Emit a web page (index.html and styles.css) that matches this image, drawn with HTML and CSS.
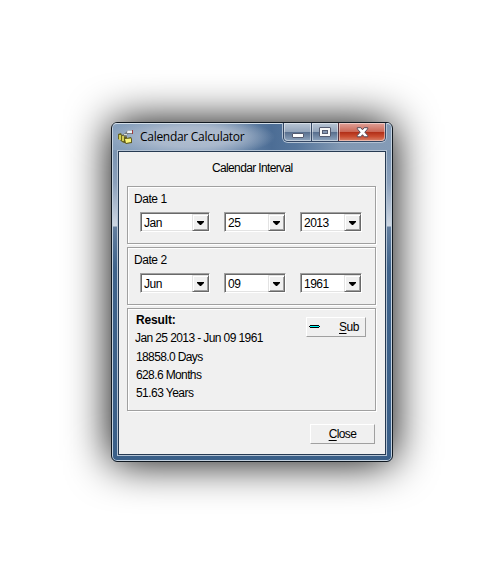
FILE: index.html
```
<!DOCTYPE html>
<html lang="en">
<head>
<meta charset="utf-8">
<title>Calendar Calculator</title>
<link rel="stylesheet" href="styles.css">
</head>
<body>
<main class="window">
  <header class="titlebar">
    <svg class="app-icon" width="16" height="16" viewBox="0 0 16 16">
      <path d="M0 5l3-1 1 2 3-1 2 3v6H6l-2-1-2-2-2-1z" fill="#6b6721"/>
      <path d="M1 6h2v5H1zM4 7h2v5H4z" fill="#d3cd55"/>
      <path d="M6 9l2-1 1 1 4-1 1 2v4l-6 1-2-2z" fill="#5f5b1c"/>
      <path d="M7 10l6-.5V13l-5 1z" fill="#fbf67a"/>
      <path d="M5 6l5-5h4v4h-4L7 8z" fill="#777d80"/>
      <path d="M9.500 1.500h4.500v2.500H9z" fill="#eef3f7"/>
      <path d="M14 1h1v4h-1z" fill="#a33b3b"/>
      <path d="M6 5h3v1H6z" fill="#d7ded9"/>
    </svg>
    <h1 class="title">Calendar Calculator</h1>
    <div class="caption-buttons">
      <div class="caption minimize">
        <svg width="13" height="6" viewBox="0 0 13 6"><rect x=".5" y=".5" width="11" height="4" rx=".5" fill="#fff" stroke="#545b70"/></svg>
      </div>
      <div class="caption maximize">
        <svg width="13" height="11" viewBox="0 0 13 11"><rect x=".5" y=".5" width="11" height="9" rx=".5" fill="#f7f7f7" stroke="#545b70"/><rect x="3.500" y="3.500" width="5" height="3" fill="#8496b0" stroke="#545b70"/></svg>
      </div>
      <div class="caption close">
        <svg width="13" height="11" viewBox="0 0 13 11"><path d="M1.300.7h3.500l1.700 2.100L8.200.7h3.500v1.200L8.800 5.200l2.900 3.300v1.300H8.200L6.500 7.700 4.800 9.800H1.300V8.500l2.900-3.300-2.900-3.300z" fill="#fff" stroke="#554b5b"/></svg>
      </div>
    </div>
  </header>
  <section class="client">
    <h2 class="heading">Calendar Interval</h2>
    <div class="group dates">
      <div class="label">Date 1</div>
      <div class="row">
        <div class="combo month"><span class="value">Jan</span><i class="drop"></i></div>
        <div class="combo day"><span class="value">25</span><i class="drop"></i></div>
        <div class="combo year"><span class="value">2013</span><i class="drop"></i></div>
      </div>
    </div>
    <div class="group dates">
      <div class="label">Date 2</div>
      <div class="row">
        <div class="combo month"><span class="value">Jun</span><i class="drop"></i></div>
        <div class="combo day"><span class="value">09</span><i class="drop"></i></div>
        <div class="combo year"><span class="value">1961</span><i class="drop"></i></div>
      </div>
    </div>
    <div class="group result">
      <div class="lines">
        <b class="result-title">Result:</b>
        <span class="interval">Jan 25 2013 - Jun 09 1961</span>
        <span class="days">18858.0 Days</span>
        <span class="months">628.6 Months</span>
        <span class="years">51.63 Years</span>
      </div>
      <div class="button sub">
        <svg width="11" height="3" viewBox="0 0 11 3" shape-rendering="crispEdges"><path d="M1 0h9v1h1v1h-1v1H1V2H0V1h1z" fill="#000"/><path d="M1 1h9v1H1z" fill="#00ffff"/></svg>
        <span><u>S</u>ub</span>
      </div>
    </div>
    <div class="button close-button"><span><u>C</u>lose</span></div>
  </section>
</main>
</body>
</html>
```
FILE: styles.css
```
* { box-sizing: border-box; }
html { background: #fff; }
body {
  margin: 0;
  min-height: 584px;
  padding: 122px 109px 0 111px;
  font: 12px/14px "Liberation Sans", sans-serif;
  color: #000;
}
.window {
  width: 282px;
  height: 340px;
  padding: 0 5px;
  border: 1px solid #101820;
  border-radius: 6px;
  background: linear-gradient(180deg, #8aa0bb 0, #7b94b1 30px, #8ba0bb 60px, #ced7e3 103px, #647f9f 104px, #3f638b 145px, #3a5f88 100%);
  box-shadow: inset 0 0 0 1px #c4d2e0, 0 0 44px #000;
}
.titlebar {
  display: flex;
  height: 27px;
  margin: 0 -4px;
  padding-left: 5px;
  border-top: 1px solid #d4dfe9;
  border-radius: 4px 4px 0 0;
  background:
    radial-gradient(ellipse 84px 20px at 78px 13px, #b2bfd0 0, #a9b8cc 50%, rgba(165,181,202,0) 100%),
    linear-gradient(90deg, #87a0bc 0, #809ab8 35%, #4c6d95 57%, #56769c 66%, #8198b3 82%, #849bb6 100%);
}
.app-icon { margin: 5px 0 0; }
.title {
  flex: 1;
  margin: 5px 0 0 6px;
  font: 12px/16px "Open Sans", sans-serif;
  letter-spacing: -.29px;
  white-space: nowrap;
}
.caption-buttons {
  display: flex;
  width: 103px;
  height: 19px;
  margin: -1px 5px 0 0;
  border: 1px solid #344764;
  border-top: 0;
  border-radius: 0 0 5px 5px;
  box-shadow: 0 0 0 1px #b3c2d3;
  clip-path: inset(0 -1px -1px -1px);
}
.caption {
  display: flex;
  justify-content: center;
  padding-top: 4px;
  box-shadow: inset 0 0 0 1px rgba(255,255,255,.45);
  background: linear-gradient(#b9c6d5 0, #94a5bb 48%, #566d8d 50%, #8fa5be 100%);
}
.minimize { width: 28px; border-right: 1px solid #344764; border-radius: 0 0 0 4px; padding: 10px 0 0 2px; }
.maximize { width: 27px; border-right: 1px solid #58313b; padding-top: 4px; }
.close {
  width: 46px;
  border-radius: 0 0 4px 0;
  background: linear-gradient(#e0a299 0, #cb6857 48%, #b02d16 50%, #c94d31 75%, #d8836b 100%);
}
.client {
  display: flex;
  flex-direction: column;
  width: 268px;
  height: 304px;
  margin: 1px 0 0 1px;
  padding: 0 8px;
  border: 1px solid #263a52;
  background: #f0f0f0;
  box-shadow: 0 0 0 1px #b3c2d3;
}
.heading {
  margin: 9px 0 0 85px;
  height: 25px;
  font-size: 12px;
  line-height: 14px;
  font-weight: 400;
  letter-spacing: -.64px;
}
.group {
  position: relative;
  width: 249px;
  border: 1px solid #a0a0a0;
  box-shadow: 1px 1px 0 #fff, inset 1px 1px 0 #fff;
}
.dates { height: 58px; margin-bottom: 3px; padding: 5px 0 0 6px; }
.label { height: 20px; letter-spacing: -.45px; }
.row { display: flex; padding-left: 6px; }
.combo {
  display: flex;
  height: 20px;
  border: 1px solid;
  border-color: #a0a0a0 #fff #fff #a0a0a0;
  background: #fff;
  box-shadow: inset 1px 1px 0 #696969, inset -1px -1px 0 #e3e3e3;
}
.month { width: 70px; }
.day { width: 62px; margin-left: 14px; }
.year { width: 62px; margin-left: 14px; }
.value { flex: 1; padding: 3px 0 0 3px; letter-spacing: -.5px; }
.drop {
  display: flex;
  justify-content: center;
  width: 17px;
  height: 17px;
  margin: 1px 0 0;
  padding-top: 6px;
  border: 1px solid;
  border-color: #e3e3e3 #696969 #696969 #e3e3e3;
  background: #f0f0f0;
  box-shadow: inset 1px 1px 0 #fff, inset -1px -1px 0 #a0a0a0;
}
.drop::before {
  content: "";
  width: 7px;
  height: 4px;
  background: #000;
  clip-path: polygon(0 0, 100% 0, 100% 25%, 57% 100%, 43% 100%, 0 25%);
}
.result { display: flex; height: 103px; padding: 4px 0 0 7px; }
.lines { display: flex; flex-direction: column; width: 171px; white-space: nowrap; }
.result-title { height: 18px; margin-left: 1px; letter-spacing: -.15px; }
.interval { height: 19px; letter-spacing: -.6px; }
.days { height: 18px; margin-left: 1px; letter-spacing: -.62px; }
.months { height: 18px; margin-left: 1px; letter-spacing: -.62px; }
.years { height: 18px; margin-left: 1px; letter-spacing: -.55px; }
.button {
  display: flex;
  height: 20px;
  border: 1px solid;
  border-color: #fff #a0a0a0 #a0a0a0 #fff;
  background: #f0f0f0;
}
.button span { padding-top: 2px; }
.button u { text-underline-offset: 2px; text-decoration-thickness: 1px; }
.sub { width: 60px; margin: 4px 0 0; padding-left: 2px; letter-spacing: -.5px; }
.sub svg { margin: 7px 19px 0 0; }
.close-button { width: 65px; align-self: flex-end; justify-content: center; margin: 13px 2px 0 0; letter-spacing: -.6px; }
```
